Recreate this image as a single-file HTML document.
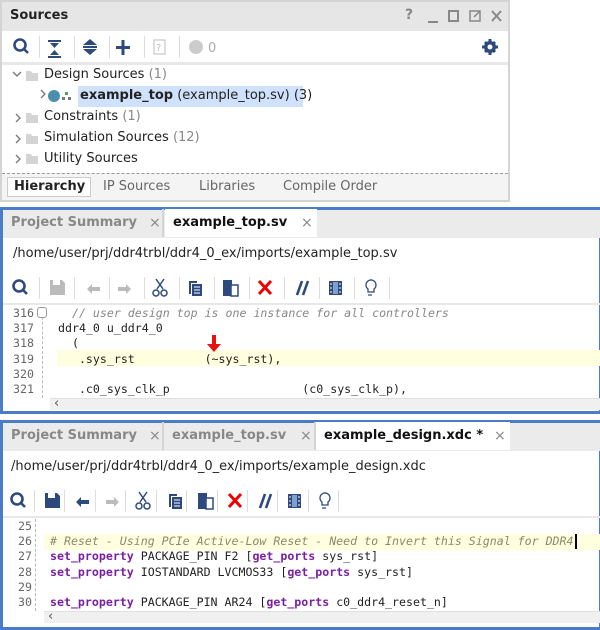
<!DOCTYPE html>
<html><head><meta charset="utf-8"><style>
*{margin:0;padding:0;box-sizing:border-box}
body{width:600px;height:628px;background:#fff;position:relative;overflow:hidden;font-family:"DejaVu Sans","Liberation Sans",sans-serif;font-size:13px;color:#222}
.a{position:absolute}
.mono{font-family:"DejaVu Sans Mono","Liberation Mono",monospace;font-size:11.6px;white-space:pre}
.tab{position:absolute;height:28px;line-height:28px;font-weight:bold;font-size:13px;padding-left:8px;white-space:nowrap}
.x{position:absolute;color:#888;font-weight:normal;font-size:14px}
</style></head><body>

<!-- Sources panel -->
<div class="a" style="left:0;top:0;width:510px;height:202px;border:2px solid #d4d4d4;background:#fff"></div>
<div class="a" style="left:2px;top:2px;width:506px;height:29px;background:#e6e6e6"></div>
<div class="a" style="left:10px;top:8px;font-weight:bold;font-size:13px">Sources</div>
<div class="a" style="left:405px;top:7px;color:#888;font-weight:bold;font-size:14px">?</div>
<svg class="a" style="left:425px;top:8px" width="80" height="16"><g stroke="#888" stroke-width="2" fill="none"><path d="M3 14h10"/><rect x="24" y="3" width="9" height="10"/><path d="M53 3h-8v10h10v-6M51 3h4v4M49 9l6-6" stroke-width="1.5"/><path d="M67 3l9 10M76 3l-9 10"/></g></svg>
<div class="a" style="left:2px;top:62px;width:506px;height:3px;background:#e8e8e8"></div>
<svg class="a" style="left:2px;top:33px" width="230" height="28">
<g fill="none" stroke="#2c4a7e" stroke-width="2.6"><circle cx="18" cy="12" r="5.5"/><path d="M22 16l4 4"/></g>
<g fill="#2c4a7e"><path d="M46 7h13v2h-13zM46 23h13v2h-13zM48 10h9l-4.5 5zM48 22h9l-4.5-5z"/><path d="M81 12l7-6 7 6zM81 16l7 6 7-6zM81 13h14v2h-14z"/><path d="M114 13h14v3h-14zM119.5 7h3v15h-3z"/></g>
<rect x="152" y="7" width="11" height="14" fill="none" stroke="#bbb"/><text x="154" y="18" font-size="10" fill="#bbb">?</text>
<circle cx="194" cy="14" r="7" fill="#ccc"/><text x="206" y="19" font-size="13" fill="#aaa" font-family="DejaVu Sans">0</text>
<g fill="#ddd"><rect x="37" y="3" width="1" height="22"/><rect x="72" y="3" width="1" height="22"/><rect x="107" y="3" width="1" height="22"/><rect x="142" y="3" width="1" height="22"/><rect x="177" y="3" width="1" height="22"/></g>
</svg>
<svg class="a" style="left:481px;top:38px" width="18" height="18"><g fill="#2c4a7e"><circle cx="9" cy="9" r="6"/><path d="M7.5 1h3v16h-3zM1 7.5h16v3h-16zM3 5l2-2 10 10-2 2zM13 3l2 2-10 10-2-2z"/></g><circle cx="9" cy="9" r="2.5" fill="#fff"/></svg>
<svg class="a" style="left:10px;top:66px" width="40" height="110"><g fill="none" stroke="#777" stroke-width="1.3"><path d="M3 6l4 4 4-4"/><path d="M6 48l4 4-4 4M6 69l4 4-4 4M6 89l4 4-4 4"/><path d="M31 24l4 4-4 4"/></g>
<g fill="#d4d4d4"><path d="M16 5h5l1 2h6v8h-12z"/><path d="M16 47h5l1 2h6v8h-12z"/><path d="M16 68h5l1 2h6v8h-12z"/><path d="M16 88h5l1 2h6v8h-12z"/></g></svg>
<div class="a" style="left:44px;top:67px">Design Sources <span style="color:#888">(1)</span></div>
<svg class="a" style="left:46px;top:88px" width="30" height="16"><circle cx="8" cy="8" r="6" fill="#4a8fae"/><rect x="19" y="4" width="3" height="3" fill="#5a9a5a"/><rect x="16" y="9" width="3" height="3" fill="#777"/><rect x="22" y="9" width="3" height="3" fill="#777"/></svg>
<div class="a" style="left:78px;top:86px;width:225px;height:21px;background:#cfe1fb"></div>
<div class="a" style="left:80px;top:88px"><b>example_top</b> (example_top.sv) (3)</div>
<div class="a" style="left:44px;top:109px">Constraints <span style="color:#888">(1)</span></div>
<div class="a" style="left:44px;top:130px">Simulation Sources <span style="color:#888">(12)</span></div>
<div class="a" style="left:44px;top:151px">Utility Sources</div>
<div class="a" style="left:2px;top:173px;width:506px;height:27px;background:#f4f4f4;border-top:1px dashed #999"></div>
<div class="a" style="left:7px;top:177px;width:84px;height:20px;border:1px solid #ccc;background:#fff"></div>
<div class="a" style="left:14px;top:179px;font-weight:bold">Hierarchy</div>
<div class="a" style="left:103px;top:179px;color:#666">IP Sources</div>
<div class="a" style="left:199px;top:179px;color:#666">Libraries</div>
<div class="a" style="left:283px;top:179px;color:#666">Compile Order</div>

<!-- Editor 1 -->
<div class="a" style="left:0;top:207px;width:602px;height:207px;border:3px solid #4a7cc8;background:#fff"></div>
<div class="a" style="left:3px;top:210px;width:597px;height:28px;background:#ebebeb"></div>
<div class="tab" style="left:3px;top:209px;width:161px;color:#888;border-right:2px solid #d4d4d4">Project Summary<span class="x" style="left:146px">×</span></div>
<div class="tab" style="left:165px;top:209px;width:152px;background:#fff;color:#111">example_top.sv<span class="x" style="left:136px">×</span></div>
<div class="a" style="left:13px;top:246px;font-size:13px">/home/user/prj/ddr4trbl/ddr4_0_ex/imports/example_top.sv</div>
<svg class="a" style="left:3px;top:274px" width="400" height="28">
<g fill="none" stroke="#2c4a7e" stroke-width="2.6"><circle cx="16" cy="12" r="5.5"/><path d="M20 16l4 4"/></g>
<path d="M47 6h12l3 3v12h-15z" fill="#bbb"/><rect x="50" y="6" width="7" height="5" fill="#fff"/>
<path d="M84 15l5-5v3h8v4h-8v3z" fill="#bbb"/><path d="M128 15l-5-5v3h-8v4h8v3z" fill="#bbb"/>
<g fill="none" stroke="#2c4a7e" stroke-width="1.5"><path d="M153 5l7 10M161 5l-7 10"/><circle cx="153" cy="19" r="3"/><circle cx="161" cy="19" r="3"/></g>
<path d="M186 7h8v2h-6v11h-2z" fill="#2c4a7e"/><rect x="189" y="10" width="10" height="12" fill="#2c4a7e"/><path d="M191 13h6M191 16h6M191 19h6" stroke="#fff"/>
<rect x="220" y="6" width="9" height="16" fill="#2c4a7e"/><rect x="228" y="11" width="7" height="11" fill="#fff" stroke="#2c4a7e" stroke-width="1.5"/>
<path d="M256 7l12 13M268 7l-12 13" stroke="#e00" stroke-width="3"/>
<path d="M294 21l5-14M300 21l5-14" stroke="#2c4a7e" stroke-width="2.6"/>
<rect x="326" y="7" width="13" height="14" fill="#2c4a7e"/><rect x="330" y="8" width="5" height="12" fill="#7f9fd0"/><path d="M327 10h2M327 14h2M327 18h2M336 10h2M336 14h2M336 18h2" stroke="#fff"/>
<path d="M363 11a5 5 0 1 1 8 4v3h-6v-3a5 5 0 0 1-2-4zM365 21h4" fill="none" stroke="#2c4a7e" stroke-width="1.3"/>
<g fill="#ddd"><rect x="36" y="3" width="1" height="22"/><rect x="71" y="3" width="1" height="22"/><rect x="106" y="3" width="1" height="22"/><rect x="141" y="3" width="1" height="22"/><rect x="176" y="3" width="1" height="22"/><rect x="211" y="3" width="1" height="22"/><rect x="246" y="3" width="1" height="22"/><rect x="281" y="3" width="1" height="22"/><rect x="316" y="3" width="1" height="22"/><rect x="351" y="3" width="1" height="22"/><rect x="386" y="3" width="1" height="22"/></g>
</svg>
<div class="a" style="left:3px;top:303px;width:597px;height:2px;background:#e8e8e8"></div>
<div class="a" style="left:57px;top:350px;width:543px;height:16px;background:#ffffe0"></div>
<div class="a" style="left:42px;top:312px;width:1px;height:86px;border-left:1px dashed #bbb"></div>
<div class="a" style="left:37px;top:307px;width:10px;height:11px;border:1px solid #999;border-radius:3px;background:#fff"></div>
<div class="mono a" style="left:0;top:306px;line-height:15.2px"><span style="display:inline-block;width:34px;text-align:right;color:#666">316
317
318
319
320
321</span></div>
<div class="mono a" style="left:58px;top:306px;line-height:15.2px;color:#222"><span style="color:#888;font-style:italic">  // user design top is one instance for all controllers</span>
ddr4_0 u_ddr4_0
  (
   .sys_rst          (~sys_rst),

   .c0_sys_clk_p                   (c0_sys_clk_p),</div>
<svg class="a" style="left:203px;top:334px" width="22" height="20"><path d="M11 1v11" stroke="#e81010" stroke-width="4"/><path d="M4 10l7 8 7-8z" fill="#e81010"/></svg>
<div class="a" style="left:50px;top:398px;width:550px;height:12px;background:#f0f0f0;border-top:1px solid #e0e0e0"></div>
<div class="a" style="left:54px;top:396px;color:#555;font-size:13px">‹</div>

<!-- Editor 2 -->
<div class="a" style="left:0;top:420px;width:602px;height:210px;border:3px solid #4a7cc8;background:#fff"></div>
<div class="a" style="left:3px;top:423px;width:597px;height:28px;background:#ebebeb"></div>
<div class="tab" style="left:3px;top:422px;width:161px;color:#888;border-right:2px solid #d4d4d4">Project Summary<span class="x" style="left:146px">×</span></div>
<div class="tab" style="left:164px;top:422px;width:152px;color:#888;border-right:2px solid #d4d4d4">example_top.sv<span class="x" style="left:136px">×</span></div>
<div class="tab" style="left:316px;top:422px;width:194px;background:#fff;color:#111">example_design.xdc *<span class="x" style="left:178px">×</span></div>
<div class="a" style="left:11px;top:459px;font-size:13px">/home/user/prj/ddr4trbl/ddr4_0_ex/imports/example_design.xdc</div>
<svg class="a" style="left:3px;top:488px" width="400" height="28">
<g fill="none" stroke="#2c4a7e" stroke-width="2.6"><circle cx="14" cy="11" r="5.5"/><path d="M18 15l4 4"/></g>
<path d="M42 5h12l3 3v12h-15z" fill="#2c4a7e"/><rect x="45" y="5" width="7" height="5" fill="#fff"/>
<path d="M73 14l5-5v3h8v4h-8v3z" fill="#2c4a7e"/><path d="M116 14l-5-5v3h-8v4h8v3z" fill="#bbb"/>
<g fill="none" stroke="#2c4a7e" stroke-width="1.5"><path d="M136 4l7 10M144 4l-7 10"/><circle cx="136" cy="18" r="3"/><circle cx="144" cy="18" r="3"/></g>
<path d="M166 6h8v2h-6v11h-2z" fill="#2c4a7e"/><rect x="169" y="9" width="10" height="12" fill="#2c4a7e"/><path d="M171 12h6M171 15h6M171 18h6" stroke="#fff"/>
<rect x="195" y="5" width="9" height="16" fill="#2c4a7e"/><rect x="203" y="10" width="7" height="11" fill="#fff" stroke="#2c4a7e" stroke-width="1.5"/>
<path d="M226 6l12 13M238 6l-12 13" stroke="#e00" stroke-width="3"/>
<path d="M257 20l5-14M263 20l5-14" stroke="#2c4a7e" stroke-width="2.6"/>
<rect x="285" y="6" width="13" height="14" fill="#2c4a7e"/><rect x="289" y="7" width="5" height="12" fill="#7f9fd0"/><path d="M286 9h2M286 13h2M286 17h2M295 9h2M295 13h2M295 17h2" stroke="#fff"/>
<path d="M317 10a5 5 0 1 1 8 4v3h-6v-3a5 5 0 0 1-2-4zM319 20h4" fill="none" stroke="#2c4a7e" stroke-width="1.3"/>
<g fill="#ddd"><rect x="31" y="2" width="1" height="22"/><rect x="61" y="2" width="1" height="22"/><rect x="92" y="2" width="1" height="22"/><rect x="122" y="2" width="1" height="22"/><rect x="153" y="2" width="1" height="22"/><rect x="183" y="2" width="1" height="22"/><rect x="214" y="2" width="1" height="22"/><rect x="244" y="2" width="1" height="22"/><rect x="274" y="2" width="1" height="22"/><rect x="305" y="2" width="1" height="22"/><rect x="335" y="2" width="1" height="22"/></g>
</svg>
<div class="a" style="left:3px;top:516px;width:597px;height:2px;background:#e8e8e8"></div>
<div class="a" style="left:44px;top:534px;width:556px;height:16px;background:#ffffe0"></div>
<div class="a" style="left:575px;top:534px;width:2px;height:15px;background:#000"></div>
<div class="a" style="left:35px;top:519px;width:1px;height:92px;border-left:1px dashed #bbb"></div>
<div class="mono a" style="left:0;top:519px;line-height:15.2px"><span style="display:inline-block;width:32px;text-align:right;color:#666">25
26
27
28
29
30</span></div>
<div class="mono a" style="left:50px;top:519px;line-height:15.2px;color:#222">
<span style="color:#8a8a6a;font-style:italic"># Reset - Using PCIe Active-Low Reset - Need to Invert this Signal for DDR4</span>
<b style="color:#7a1fa0">set_property</b> PACKAGE_PIN F2 [<b style="color:#7a1fa0">get_ports</b> sys_rst]
<b style="color:#7a1fa0">set_property</b> IOSTANDARD LVCMOS33 [<b style="color:#7a1fa0">get_ports</b> sys_rst]

<b style="color:#7a1fa0">set_property</b> PACKAGE_PIN AR24 [<b style="color:#7a1fa0">get_ports</b> c0_ddr4_reset_n]</div>
<div class="a" style="left:44px;top:611px;width:556px;height:12px;background:#f0f0f0;border-top:1px solid #e0e0e0"></div>
<div class="a" style="left:48px;top:609px;color:#555;font-size:13px">‹</div>
</body></html>
